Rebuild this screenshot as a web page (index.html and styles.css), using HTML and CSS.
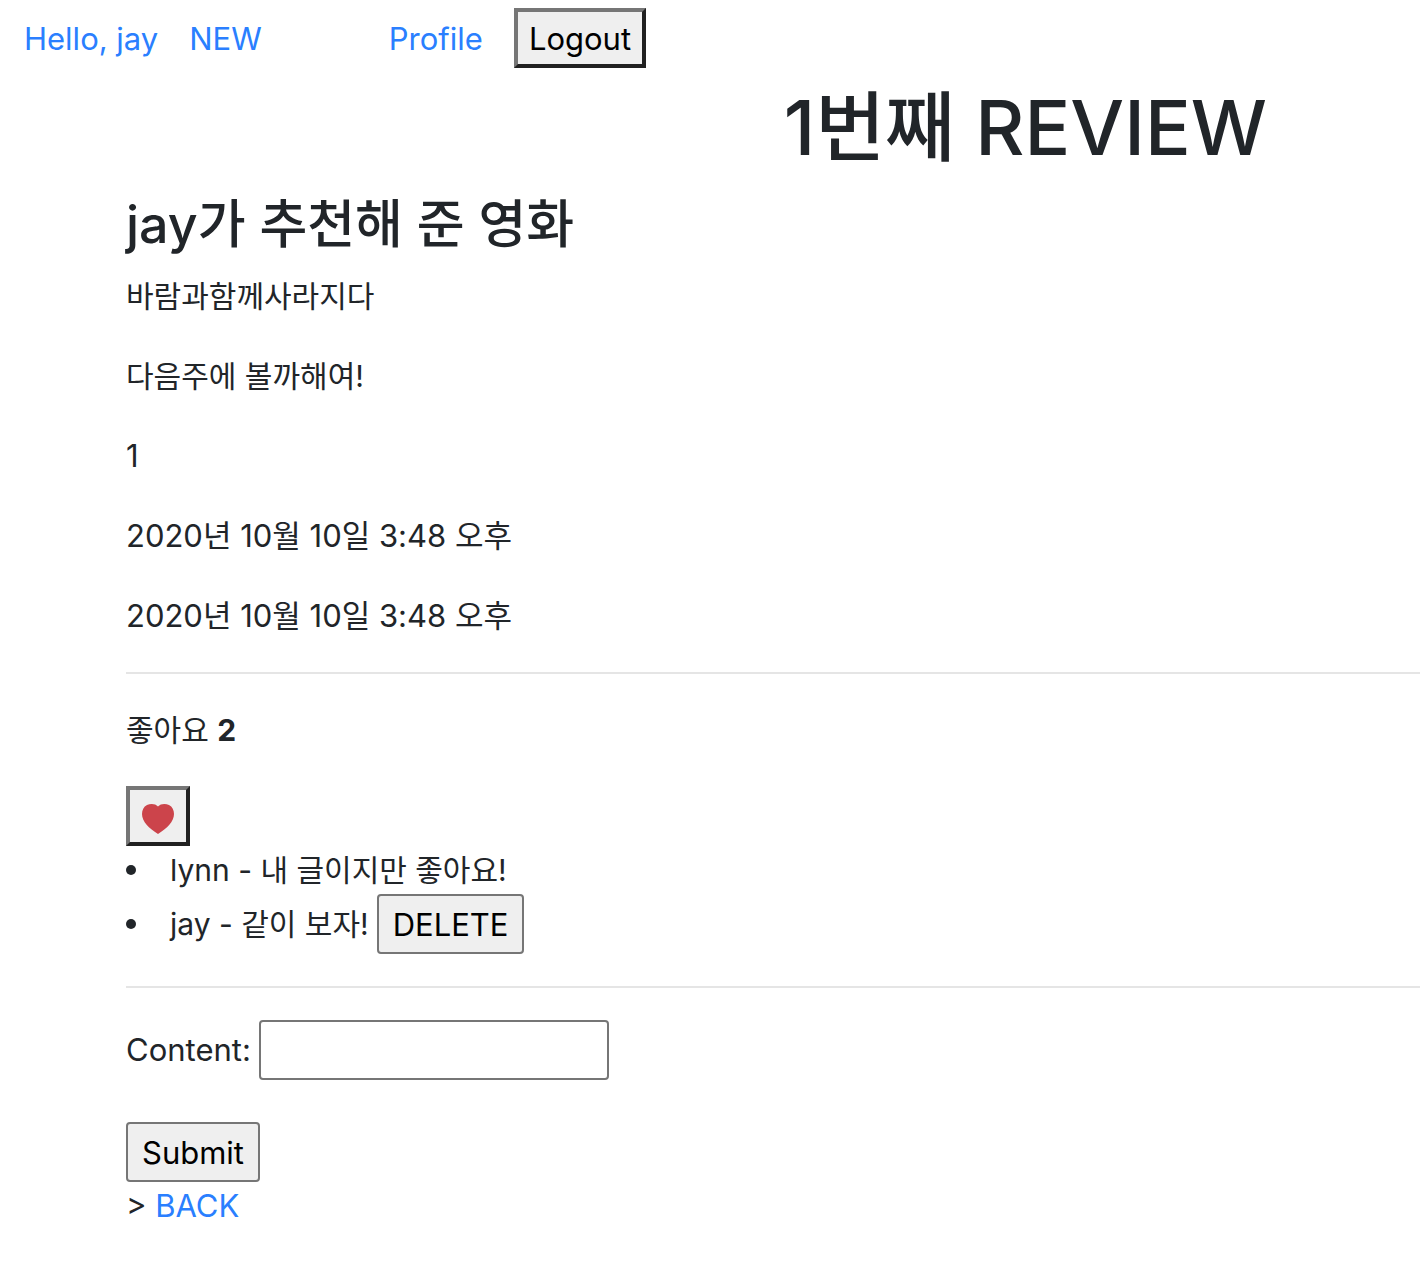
FILE: index.html
```html
<!DOCTYPE html>
<html lang="ko">
<head>
<meta charset="utf-8">
<meta name="viewport" content="width=device-width, initial-scale=1">
<title>REVIEW</title>
<link rel="stylesheet" href="styles.css">
</head>
<body>
<nav class="nav">
  <a class="nav-link" href="#">Hello, jay</a>
  <a class="nav-link" href="#">NEW</a>
  <a class="nav-link nav-link-profile" href="#">Profile</a>
  <button class="btn btn-raised" type="button">Logout</button>
</nav>
<main class="review">
  <h1 class="title">1번째 REVIEW</h1>
  <h2 class="subtitle">jay가 추천해 준 영화</h2>
  <p>바람과함께사라지다</p>
  <p>다음주에 볼까해여!</p>
  <p class="meta">1</p>
  <p class="meta">2020년 10월 10일 3:48 오후</p>
  <p class="meta">2020년 10월 10일 3:48 오후</p>
  <hr>
  <p>좋아요 <b>2</b></p>
  <button class="btn btn-raised btn-like" type="button" aria-label="좋아요">
    <svg class="heart" viewBox="0 0 32 30" aria-hidden="true"><path d="M16 2.6C13.5-.4 8.5-.6 5 1.1C1.600 2.800 0 6.200 0 10C0 17.500 7 24.500 16 30C25 24.500 32 17.500 32 10C32 6.200 30.400 2.800 27 1.100C23.500-.6 18.500-.4 16 2.600Z"/></svg>
  </button>
  <ul class="comments">
    <li class="comment"><span>lynn - 내 글이지만 좋아요!</span></li>
    <li class="comment"><span>jay - 같이 보자!</span><button class="btn btn-delete" type="button">DELETE</button></li>
  </ul>
  <hr>
  <form class="comment-form">
    <div class="field">
      <label for="content">Content:</label>
      <input class="text-input" id="content" type="text">
    </div>
    <button class="btn" type="button">Submit</button>
  </form>
  <div class="back">&gt; <a href="#">BACK</a></div>
</main>
</body>
</html>
```
FILE: styles.css
```css
* {
  box-sizing: border-box;
}

body {
  margin: 0;
  background: #fff;
  color: #212529;
  font-family: Inter, "Noto Sans CJK KR", sans-serif;
  font-size: 30px;
  line-height: 48px;
}

a {
  color: #2a7fff;
  text-decoration: none;
}

p {
  margin: 0 0 32px;
}

hr {
  height: 2px;
  margin: 32px 0;
  border: 0;
  background: #e5e5e5;
}

.nav,
.meta,
.comment-form,
.back {
  font-size: 31px;
}

.nav {
  display: flex;
  align-items: center;
  gap: 31px;
  padding: 8px 24px;
}

.nav-link {
  padding-top: 2px;
}

.nav-link-profile {
  margin-left: 96px;
}

.btn {
  height: 60px;
  padding: 2px 14px 0;
  border: 2px solid #767676;
  border-radius: 4px;
  background: #efefef;
  color: #000;
  font: inherit;
  font-size: 31px;
}

.btn-raised {
  padding: 2px 11px 0;
  border-width: 4px;
  border-color: #767676 #212121 #212121 #767676;
  border-radius: 0;
}

.review {
  padding: 3px 0 0 126px;
}

.title,
.subtitle {
  font-weight: 500;
}

.title {
  margin: 0 0 16px;
  padding-left: 39%;
  font-size: 76px;
  line-height: 96px;
  text-align: center;
}

.subtitle {
  margin: 0 0 13px;
  font-size: 52px;
  line-height: 68px;
}

.btn-like {
  display: flex;
  align-items: center;
  padding: 6px 12px 0;
}

.heart {
  display: block;
  width: 32px;
  height: 30px;
  fill: #cc444b;
}

.comments {
  margin: 0;
  padding: 0;
  list-style: none;
}

.comment {
  display: flex;
  align-items: center;
}

.comment::before {
  content: "";
  width: 10px;
  height: 10px;
  margin-right: 34px;
  border-radius: 50%;
  background: currentColor;
}

.btn-delete {
  margin-left: 8px;
}

.field {
  display: flex;
  align-items: center;
  gap: 8px;
  margin-bottom: 42px;
}

.text-input {
  width: 350px;
  height: 60px;
  padding: 2px 4px;
  border: 2px solid #767676;
  border-radius: 4px;
  font: inherit;
}
```
